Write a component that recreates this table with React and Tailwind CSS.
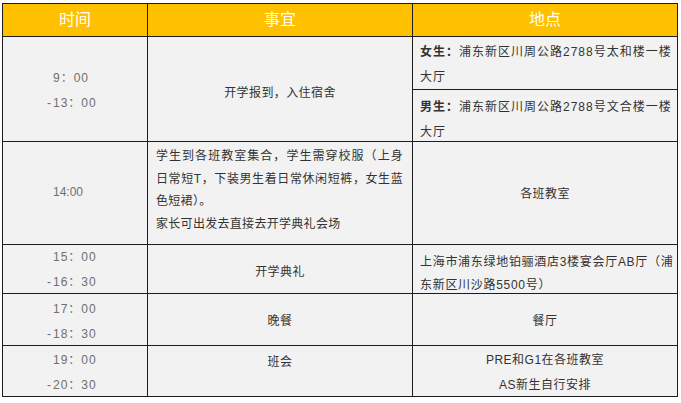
import React from "react";

const font = "font-['Liberation_Sans','Noto_Sans_CJK_SC',sans-serif]";

function TimeCell({ h, pt, lines, plain }) {
  return (
    <div className={`w-[145px] border-r border-b border-[#1c1c1c] pl-[50px] text-[12px] text-[#6f6f6f] leading-[25px] ${plain ? "" : "tracking-[1px]"}`} style={{ height: h, paddingTop: pt }}>
      {lines.map((l, i) => (
        <div key={i} className="whitespace-nowrap">
          {l.startsWith("-") ? (
            <>
              <span className="-ml-[6px] inline-block w-[6px] tracking-normal">-</span>
              {l.slice(1)}
            </>
          ) : (
            l
          )}
        </div>
      ))}
    </div>
  );
}

function Cell({ w, pt, children, className = "" }) {
  return (
    <div className={`${w} border-r border-b border-[#1c1c1c] text-[12px] text-[#333] ${className}`} style={{ paddingTop: pt }}>
      {children}
    </div>
  );
}

export default function App() {
  return (
    <div className={`w-[681px] h-[403px] bg-white pl-[2px] pt-[3px] ${font}`}>
      <div className="w-max border-l border-t border-[#1c1c1c] bg-[#f2f2f2]">
        {/* header */}
        <div className="flex h-[33px] bg-[#ffc000] text-white text-[16px]">
          <div className="w-[145px] border-r border-b border-[#1c1c1c] flex items-center justify-center">时间</div>
          <div className="w-[265px] border-r border-b border-[#1c1c1c] flex items-center justify-center">事宜</div>
          <div className="w-[265px] border-r border-b border-[#1c1c1c] flex items-center justify-center">地点</div>
        </div>

        {/* row 1 */}
        <div className="flex h-[105px]">
          <TimeCell h="105px" pt="29px" lines={["9：00", "-13：00"]} />
          <Cell w="w-[265px]" pt="44px" className="text-center leading-[25px] tracking-[0.4px]">开学报到，入住宿舍</Cell>
          <div className="w-[265px] flex flex-col border-r border-[#1c1c1c] text-[12px] text-[#333] leading-[25px] tracking-[1px]">
            <div className="h-[53px] border-b border-[#1c1c1c] pl-[7px] pt-[3px] whitespace-nowrap">
              <div><span className="font-bold">女生：</span>浦东新区川周公路2788号太和楼一楼</div>
              <div>大厅</div>
            </div>
            <div className="h-[52px] border-b border-[#1c1c1c] pl-[7px] pt-[5px] whitespace-nowrap">
              <div><span className="font-bold">男生：</span>浦东新区川周公路2788号文合楼一楼</div>
              <div>大厅</div>
            </div>
          </div>
        </div>

        {/* row 2 */}
        <div className="flex h-[103px]">
          <TimeCell h="103px" pt="38px" lines={["14:00"]} plain />
          <Cell w="w-[265px]" pt="3px" className="pl-[8px] pr-[9px] leading-[22.5px] tracking-[0.3px]">
            <div className="text-justify [text-align-last:justify] whitespace-nowrap">学生到各班教室集合，学生需穿校服（上身</div>
            <div className="text-justify [text-align-last:justify] whitespace-nowrap">日常短T，下装男生着日常休闲短裤，女生蓝</div>
            <div>色短裙）。</div>
            <div className="whitespace-nowrap">家长可出发去直接去开学典礼会场</div>
          </Cell>
          <Cell w="w-[265px]" pt="40px" className="text-center leading-[25px] tracking-[0.4px]">各班教室</Cell>
        </div>

        {/* row 3 */}
        <div className="flex h-[49px]">
          <TimeCell h="49px" pt="0px" lines={["15：00", "-16：30"]} />
          <Cell w="w-[265px]" pt="15px" className="text-center leading-[25px] tracking-[0.4px]">开学典礼</Cell>
          <Cell w="w-[265px]" pt="6px" className="pl-[7px] leading-[23px] whitespace-nowrap tracking-[0.7px]">
            <div>上海市浦东绿地铂骊酒店3楼宴会厅AB厅（浦</div>
            <div>东新区川沙路5500号）</div>
          </Cell>
        </div>

        {/* row 4 */}
        <div className="flex h-[52px]">
          <TimeCell h="52px" pt="3px" lines={["17：00", "-18：30"]} />
          <Cell w="w-[265px]" pt="15px" className="text-center leading-[25px] tracking-[0.4px]">晚餐</Cell>
          <Cell w="w-[265px]" pt="15px" className="text-center leading-[25px] tracking-[0.4px]">餐厅</Cell>
        </div>

        {/* row 5 */}
        <div className="flex h-[51px]">
          <TimeCell h="51px" pt="2px" lines={["19：00", "-20：30"]} />
          <Cell w="w-[265px]" pt="4px" className="text-center leading-[25px] tracking-[0.4px]">班会</Cell>
          <Cell w="w-[265px]" pt="2px" className="text-center leading-[25px] tracking-[0.5px]">
            <div>PRE和G1在各班教室</div>
            <div>AS新生自行安排</div>
          </Cell>
        </div>
      </div>
    </div>
  );
}
